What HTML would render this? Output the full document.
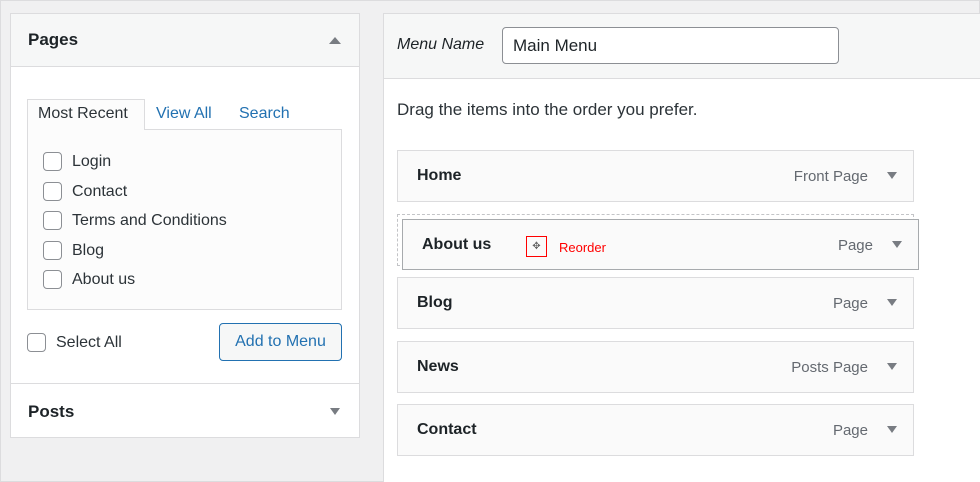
<!DOCTYPE html>
<html><head><meta charset="utf-8"><style>
*{box-sizing:border-box;margin:0;padding:0}
html,body{width:980px;height:482px;overflow:hidden}
body{background:#f0f0f1;font-family:"Liberation Sans",Arial,sans-serif;position:relative;color:#1d2327}
.abs{position:absolute}
.panel{background:#fff;border:1px solid #dcdcde}
.tri-up{width:0;height:0;border-left:6px solid transparent;border-right:6px solid transparent;border-bottom:7px solid #787c82}
.tri-dn{width:0;height:0;border-left:5px solid transparent;border-right:5px solid transparent;border-top:7px solid #787c82}
.cb{width:19px;height:19px;border:1px solid #8c8f94;border-radius:4px;background:#fff}
.item{background:#fafafa;border:1px solid #dcdcde;height:52px}
.item b{position:absolute;left:19px;top:16px;font-size:16px}
.item span.t{position:absolute;right:45px;top:17px;font-size:15px;color:#646970}
.item .tri-dn{position:absolute;right:16px;top:21px}
.lbl{font-size:16px;color:#2c3338}
</style></head><body>
<div class="abs" style="left:0;top:0;width:980px;height:482px;border:1px solid #dcdcde"></div>
<!-- left panel -->
<div class="abs panel" style="left:10px;top:13px;width:350px;height:425px"></div>
<div class="abs" style="left:11px;top:14px;width:348px;height:53px;background:#f6f7f7;border-bottom:1px solid #dcdcde"></div>
<div class="abs" style="left:28px;top:30px;font-size:17px;font-weight:bold">Pages</div>
<div class="tri-up abs" style="left:329px;top:37px"></div>
<div class="abs" style="left:27px;top:129px;width:315px;height:181px;background:#fcfcfc;border:1px solid #dcdcde"></div>
<div class="abs" style="left:27px;top:99px;width:118px;height:31px;background:#fcfcfc;border:1px solid #dcdcde;border-bottom:none"></div>
<div class="abs lbl" style="left:38px;top:105px">Most Recent</div>
<div class="abs" style="left:156px;top:105px;font-size:16px;color:#2271b1">View All</div>
<div class="abs" style="left:239px;top:105px;font-size:16px;color:#2271b1">Search</div>
<div class="abs cb" style="left:43px;top:152px"></div><div class="abs lbl" style="left:72px;top:153px">Login</div>
<div class="abs cb" style="left:43px;top:182px"></div><div class="abs lbl" style="left:72px;top:183px">Contact</div>
<div class="abs cb" style="left:43px;top:211px"></div><div class="abs lbl" style="left:72px;top:212px">Terms and Conditions</div>
<div class="abs cb" style="left:43px;top:241px"></div><div class="abs lbl" style="left:72px;top:242px">Blog</div>
<div class="abs cb" style="left:43px;top:270px"></div><div class="abs lbl" style="left:72px;top:271px">About us</div>
<div class="abs cb" style="left:27px;top:333px"></div><div class="abs lbl" style="left:56px;top:334px">Select All</div>
<div class="abs" style="left:219px;top:323px;width:123px;height:38px;border:1px solid #2271b1;border-radius:4px;background:#f6f7f7;color:#2271b1;font-size:16px;text-align:center;line-height:36px">Add to Menu</div>
<div class="abs" style="left:11px;top:383px;width:348px;height:1px;background:#dcdcde"></div>
<div class="abs" style="left:28px;top:402px;font-size:17px;font-weight:bold">Posts</div>
<div class="tri-dn abs" style="left:330px;top:408px"></div>
<!-- right panel -->
<div class="abs panel" style="left:383px;top:13px;width:600px;height:475px"></div>
<div class="abs" style="left:384px;top:14px;width:598px;height:65px;background:#f6f7f7;border-bottom:1px solid #dcdcde"></div>
<div class="abs" style="left:397px;top:36px;font-size:16px;font-style:italic;color:#1d2327">Menu Name</div>
<div class="abs" style="left:502px;top:27px;width:337px;height:37px;border:1px solid #8c8f94;border-radius:4px;background:#fff;font-size:17px;padding-left:10px;line-height:35px">Main Menu</div>
<div class="abs" style="left:397px;top:100px;font-size:17px;color:#2c3338">Drag the items into the order you prefer.</div>
<div class="abs item" style="left:397px;top:150px;width:517px"><b>Home</b><span class="t">Front Page</span><div class="tri-dn"></div></div>
<div class="abs" style="left:397px;top:214px;width:517px;height:52px;border:1px dashed #c3c4c7"></div>
<div class="abs item" style="left:402px;top:219px;width:517px;height:51px;border-color:#a7aaad"><b>About us</b><span class="t">Page</span><div class="tri-dn"></div></div>
<div class="abs" style="left:526px;top:236px;width:21px;height:21px;border:1px solid #f00"></div>
<div class="abs" style="left:530px;top:240px;width:13px;height:13px;font-size:10px;color:#666;line-height:13px;text-align:center">✥</div>
<div class="abs" style="left:559px;top:240px;font-size:13px;color:#f00">Reorder</div>
<div class="abs item" style="left:397px;top:277px;width:517px"><b>Blog</b><span class="t">Page</span><div class="tri-dn"></div></div>
<div class="abs item" style="left:397px;top:341px;width:517px"><b>News</b><span class="t">Posts Page</span><div class="tri-dn"></div></div>
<div class="abs item" style="left:397px;top:404px;width:517px"><b>Contact</b><span class="t">Page</span><div class="tri-dn"></div></div>
</body></html>
